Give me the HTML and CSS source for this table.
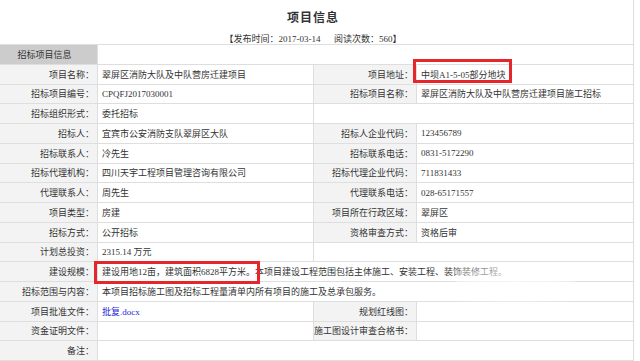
FILE: index.html
```html
<!DOCTYPE html>
<html lang="zh-CN">
<head>
<meta charset="utf-8">
<title>项目信息</title>
<link rel="stylesheet" href="styles.css">
</head>
<body>
<div class="page">
  <div class="top">
    <h1 class="title">项目信息</h1>
    <div class="meta">【发布时间：2017-03-14&nbsp;&nbsp;&nbsp;&nbsp;&nbsp;&nbsp;阅读次数：560】</div>
  </div>
  <div class="grid">
    <div class="hd">招标项目信息</div>
    <div class="v s3"></div>

    <div class="lb">项目名称：</div>
    <div class="v">翠屏区消防大队及中队营房迁建项目</div>
    <div class="lb">项目地址：</div>
    <div class="v"><span class="hl hl1">中坝A1-5-05部分地块</span></div>

    <div class="lb">招标项目编号：</div>
    <div class="v">CPQFJ2017030001</div>
    <div class="lb">招标项目名称：</div>
    <div class="v">翠屏区消防大队及中队营房迁建项目施工招标</div>

    <div class="lb">招标组织形式：</div>
    <div class="v">委托招标</div>
    <div class="v s2"></div>

    <div class="lb">招标人：</div>
    <div class="v">宜宾市公安消防支队翠屏区大队</div>
    <div class="lb">招标人企业代码：</div>
    <div class="v">123456789</div>

    <div class="lb">招标联系人：</div>
    <div class="v">冷先生</div>
    <div class="lb">招标联系电话：</div>
    <div class="v">0831-5172290</div>

    <div class="lb">招标代理机构：</div>
    <div class="v">四川天宇工程项目管理咨询有限公司</div>
    <div class="lb">招标代理企业代码：</div>
    <div class="v">711831433</div>

    <div class="lb">代理联系人：</div>
    <div class="v">周先生</div>
    <div class="lb">代理联系电话：</div>
    <div class="v">028-65171557</div>

    <div class="lb">项目类型：</div>
    <div class="v">房建</div>
    <div class="lb">项目所在行政区域：</div>
    <div class="v">翠屏区</div>

    <div class="lb">招标方式：</div>
    <div class="v">公开招标</div>
    <div class="lb">资格审查方式：</div>
    <div class="v">资格后审</div>

    <div class="lb">计划总投资：</div>
    <div class="v">2315.14 万元</div>
    <div class="v s2"></div>

    <div class="lb">建设规模：</div>
    <div class="v s3"><span class="hl hl2">建设用地12亩，建筑面积6828平方米。</span>本项目建设工程范围包括主体施工、安装工程、装饰装修工程。</div>

    <div class="lb">招标范围与内容：</div>
    <div class="v s3">本项目招标施工图及招标工程量清单内所有项目的施工及总承包服务。</div>

    <div class="lb">项目批准文件：</div>
    <div class="v"><a class="link" href="#">批复.docx</a></div>
    <div class="lb">规划红线图：</div>
    <div class="v"></div>

    <div class="lb">资金证明文件：</div>
    <div class="v"></div>
    <div class="lb">施工图设计审查合格书：</div>
    <div class="v"></div>

    <div class="lb">备注：</div>
    <div class="v s3"></div>
  </div>
  <div class="watermark"></div>
</div>
</body>
</html>
```

FILE: styles.css
```css
html, body {
  margin: 0;
  padding: 0;
  background: #fff;
}
body {
  font-family: "Liberation Serif", "Noto Sans CJK SC", sans-serif;
  font-size: 9px;
  color: #333;
  overflow: hidden;
}
.page {
  position: relative;
  width: 633px;
  min-height: 361px;
  border-right: 1px solid #dcdcdc;
}
.top {
  height: 44px;
  padding-right: 7px;
  text-align: center;
}
.title {
  margin: 0;
  padding-top: 10px;
  font-family: "Noto Sans CJK SC", sans-serif;
  font-size: 12px;
  line-height: 14px;
  font-weight: bold;
  letter-spacing: 1px;
  color: #333;
}
.meta {
  margin-top: 10px;
  line-height: 10px;
  color: #333;
}
.grid {
  display: grid;
  grid-template-columns: 97px 215px 102px 216px;
  grid-auto-rows: 18.75px;
  gap: 1px;
  padding: 1px 0;
  background: #dedede;
  width: 633px;
}
.grid > div {
  display: flex;
  align-items: center;
  white-space: nowrap;
  overflow: visible;
}
.hd {
  background: #cccccc;
  justify-content: center;
  padding-right: 8px;
  color: #333;
}
.lb {
  background: #f3f3f3;
  justify-content: flex-end;
  padding-right: 3px;
  color: #333;
}
.v {
  background: #fff;
  padding-left: 4px;
}
.s3 { grid-column: span 3; }
.s2 { grid-column: span 2; }
.link {
  color: #1f1fd8;
  text-decoration: none;
}
.hl {
  position: relative;
}
.hl::after {
  content: "";
  position: absolute;
  border: 3px solid #e5262b;
}
.hl1::after {
  left: -8px;
  right: -6px;
  top: -9px;
  bottom: -2px;
}
.hl2::after {
  left: -8px;
  right: -5px;
  top: -4px;
  bottom: -6px;
}
.watermark {
  position: absolute;
  left: 455px;
  top: 262px;
  width: 120px;
  height: 40px;
  background: radial-gradient(ellipse at center, rgba(255,255,255,0.7) 0%, rgba(255,255,255,0.5) 55%, rgba(255,255,255,0) 100%);
  pointer-events: none;
}
```
